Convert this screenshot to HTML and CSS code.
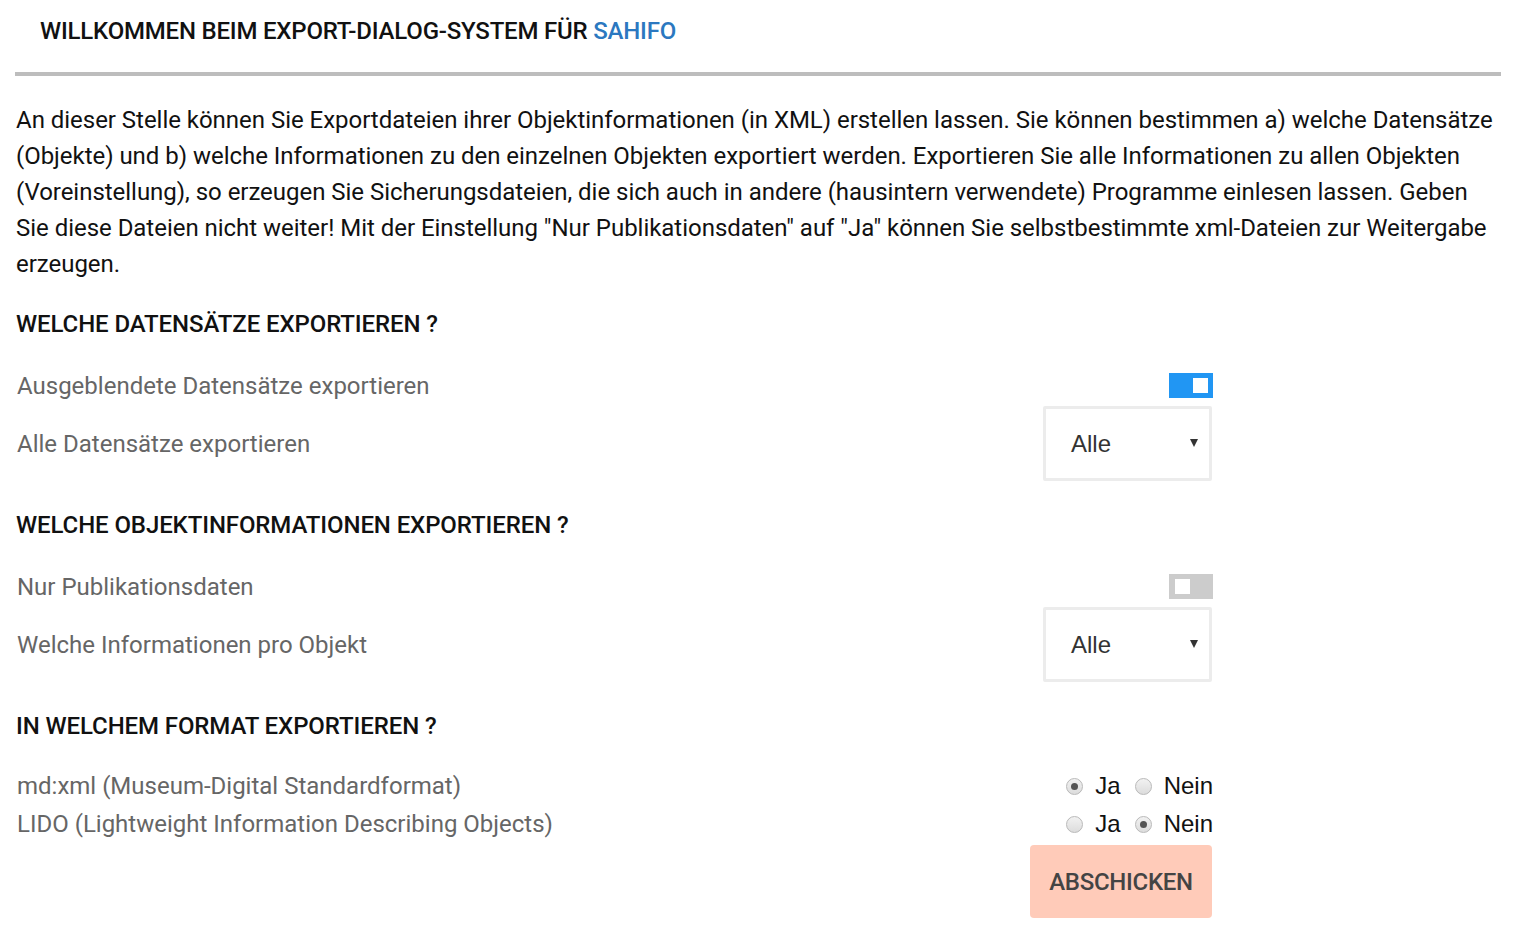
FILE: index.html
```html
<!DOCTYPE html>
<html lang="de">
<head>
<meta charset="utf-8">
<title>Export-Dialog</title>
<link rel="stylesheet" href="styles.css">
</head>
<body>
<div class="page">
  <h1 class="title">WILLKOMMEN BEIM EXPORT-DIALOG-SYSTEM FÜR <span class="brand">SAHIFO</span></h1>
  <hr class="rule">
  <p class="intro">An dieser Stelle können Sie Exportdateien ihrer Objektinformationen (in XML) erstellen lassen. Sie können bestimmen a) welche Datensätze (Objekte) und b) welche Informationen zu den einzelnen Objekten exportiert werden. Exportieren Sie alle Informationen zu allen Objekten (Voreinstellung), so erzeugen Sie Sicherungsdateien, die sich auch in andere (hausintern verwendete) Programme einlesen lassen. Geben Sie diese Dateien nicht weiter! Mit der Einstellung "Nur Publikationsdaten" auf "Ja" können Sie selbstbestimmte xml-Dateien zur Weitergabe erzeugen.</p>

  <form class="form">
    <h2 class="section-title">WELCHE DATENSÄTZE EXPORTIEREN ?</h2>
    <div class="row row-toggle">
      <span class="label">Ausgeblendete Datensätze exportieren</span>
      <span class="toggle on"><span class="knob"></span></span>
    </div>
    <div class="row row-select">
      <span class="label">Alle Datensätze exportieren</span>
      <span class="select"><span class="select-value">Alle</span><span class="caret"></span></span>
    </div>

    <h2 class="section-title">WELCHE OBJEKTINFORMATIONEN EXPORTIEREN ?</h2>
    <div class="row row-toggle">
      <span class="label">Nur Publikationsdaten</span>
      <span class="toggle off"><span class="knob"></span></span>
    </div>
    <div class="row row-select">
      <span class="label">Welche Informationen pro Objekt</span>
      <span class="select"><span class="select-value">Alle</span><span class="caret"></span></span>
    </div>

    <h2 class="section-title">IN WELCHEM FORMAT EXPORTIEREN ?</h2>
    <div class="row row-radio first">
      <span class="label">md:xml (Museum-Digital Standardformat)</span>
      <span class="radios">
        <label class="opt"><input type="radio" name="mdxml" checked> Ja</label>
        <label class="opt"><input type="radio" name="mdxml"> Nein</label>
      </span>
    </div>
    <div class="row row-radio">
      <span class="label">LIDO (Lightweight Information Describing Objects)</span>
      <span class="radios">
        <label class="opt"><input type="radio" name="lido"> Ja</label>
        <label class="opt"><input type="radio" name="lido" checked> Nein</label>
      </span>
    </div>
    <div class="actions">
      <button type="button" class="submit">ABSCHICKEN</button>
    </div>
  </form>
</div>
</body>
</html>
```

FILE: styles.css
```css
html, body {
  margin: 0;
  padding: 0;
  background: #fff;
}

body {
  font-family: Roboto, "Liberation Sans", Arial, sans-serif;
  color: #111;
}

.page {
  padding: 0 16px 0 15px;
  width: 1486px;
}

.title {
  margin: 16px 0 0 25px;
  font-size: 24px;
  line-height: 30px;
  font-weight: 500;
  letter-spacing: -0.2px;
  color: #111;
}

.brand {
  color: #2b78c0;
}

.rule {
  margin: 26px 0 0 0;
  border: 0;
  height: 4px;
  background: #bdbdbd;
}

.intro {
  margin: 26px 0 0 1px;
  font-size: 24px;
  line-height: 36px;
  letter-spacing: -0.03px;
  color: #111;
}

.form {
  width: 1197px;
  margin-left: 1px;
  display: flex;
  flex-direction: column;
}

.section-title {
  margin: 27px 0 0 0;
  font-size: 24px;
  line-height: 30px;
  font-weight: 500;
  letter-spacing: -0.1px;
  color: #111;
}

.section-title + .row {
  margin-top: 34px;
}

.row {
  display: flex;
  justify-content: space-between;
  align-items: center;
}

.label {
  font-size: 24px;
  color: #666;
  padding-left: 1px;
}

.row-toggle {
  height: 25px;
}

.row-select {
  margin-top: 8px;
}

.row-select + .section-title {
  margin-top: 29px;
}

.toggle {
  display: flex;
  align-items: center;
  width: 44px;
  height: 25px;
  box-sizing: border-box;
  padding: 0 5px;
}

.toggle .knob {
  width: 15px;
  height: 15px;
  background: #fff;
}

.toggle.on {
  background: #2196f3;
  justify-content: flex-end;
}

.toggle.off {
  background: #cccccc;
  justify-content: flex-start;
  padding: 0 6px;
}

.select {
  display: flex;
  align-items: center;
  justify-content: space-between;
  width: 169px;
  height: 75px;
  box-sizing: border-box;
  border: 3px solid #ececec;
  border-radius: 2px;
  padding: 0 11px 0 25px;
  font-family: "Liberation Sans", Arial, sans-serif;
  font-size: 24px;
  color: #333;
  margin-right: 1px;
}

.caret {
  width: 0;
  height: 0;
  border-left: 4.5px solid transparent;
  border-right: 4.5px solid transparent;
  border-top: 8px solid #333;
  margin-top: -2px;
}

.row-radio {
  height: 38px;
}

.row-radio.first {
  margin-top: 26px;
}

.radios {
  display: flex;
  gap: 14px;
  font-family: "Liberation Sans", Arial, sans-serif;
  font-size: 24px;
  color: #111;
}

.opt {
  display: flex;
  align-items: center;
  gap: 0;
}

.opt input {
  -webkit-appearance: none;
  appearance: none;
  margin: 0 12px 0 0;
  width: 17px;
  height: 17px;
  border-radius: 50%;
  border: 1px solid #b9b9b9;
  background: linear-gradient(#f2f2f2, #dcdcdc);
  box-sizing: border-box;
  display: grid;
  place-items: center;
}

.opt input:checked::after {
  content: "";
  width: 7px;
  height: 7px;
  border-radius: 50%;
  background: #555;
}

.actions {
  display: flex;
  justify-content: flex-end;
  margin-top: 2px;
}

.submit {
  width: 182px;
  height: 73px;
  margin-right: 1px;
  border: 0;
  border-radius: 4px;
  background: #ffcbb9;
  color: #444;
  font-family: Roboto, "Liberation Sans", Arial, sans-serif;
  font-size: 24px;
  font-weight: 500;
  letter-spacing: -0.3px;
  padding: 0;
}
```
